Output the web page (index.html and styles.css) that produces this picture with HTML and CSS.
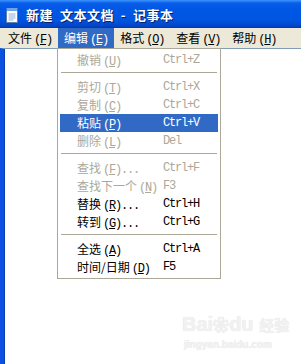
FILE: index.html
```html
<!DOCTYPE html>
<html lang="zh-CN">
  <head>
    <meta charset="utf-8">
    <meta name="viewport" content="width=device-width">
    <title>新建 文本文档 - 记事本</title>
    <link rel="stylesheet" href="styles.css">
  </head>
  <body>
    <div class="window">
      <div class="titlebar">
        <svg class="app-icon" width="16" height="16" viewBox="0 0 16 16">
          <rect x="2.5" y="2.5" width="11" height="13" fill="#fff" stroke="#5a7fa8"/>
          <rect x="2" y="1" width="12" height="3" fill="#2c7be0"/>
          <path d="M4 1v3M6 1v3M8 1v3M10 1v3M12 1v3" stroke="#cfe3ff" stroke-width="0.8"/>
          <path d="M4.5 7h7M4.5 9h7M4.5 11h7M4.5 13h5" stroke="#8fb0d8" stroke-width="1"/>
        </svg>
        <span class="title">新建&nbsp;&nbsp;文本文档&nbsp;&nbsp;-&nbsp;&nbsp;记事本</span>
      </div>

      <div class="menubar">
        <span class="menu">文件<span class="acc">(<u>F</u>)</span></span>
        <span class="menu open">编辑<span class="acc">(<u>E</u>)</span></span>
        <span class="menu">格式<span class="acc">(<u>O</u>)</span></span>
        <span class="menu">查看<span class="acc">(<u>V</u>)</span></span>
        <span class="menu">帮助<span class="acc">(<u>H</u>)</span></span>
      </div>

      <div class="client">
        <div class="watermark">
          <div class="wm-logo">Bai<span class="paw">❀</span>du <span class="wm-cn">经验</span></div>
          <div class="wm-url">jingyan.baidu.com</div>
        </div>
      </div>

      <ul class="dropdown">
        <li class="item disabled"><span>撤销<span class="acc">(<u>U</u>)</span></span><span class="key">Ctrl+Z</span></li>
        <li class="sep"></li>
        <li class="item disabled"><span>剪切<span class="acc">(<u>T</u>)</span></span><span class="key">Ctrl+X</span></li>
        <li class="item disabled"><span>复制<span class="acc">(<u>C</u>)</span></span><span class="key">Ctrl+C</span></li>
        <li class="item hover"><span>粘贴<span class="acc">(<u>P</u>)</span></span><span class="key">Ctrl+V</span></li>
        <li class="item disabled"><span>删除<span class="acc">(<u>L</u>)</span></span><span class="key">Del</span></li>
        <li class="sep"></li>
        <li class="item disabled"><span>查找<span class="acc">(<u>F</u>)...</span></span><span class="key">Ctrl+F</span></li>
        <li class="item disabled"><span>查找下一个<span class="acc">(<u>N</u>)</span></span><span class="key">F3</span></li>
        <li class="item"><span>替换<span class="acc">(<u>R</u>)...</span></span><span class="key">Ctrl+H</span></li>
        <li class="item"><span>转到<span class="acc">(<u>G</u>)...</span></span><span class="key">Ctrl+G</span></li>
        <li class="sep"></li>
        <li class="item"><span>全选<span class="acc">(<u>A</u>)</span></span><span class="key">Ctrl+A</span></li>
        <li class="item"><span>时间/日期<span class="acc">(<u>D</u>)</span></span><span class="key">F5</span></li>
      </ul>
    </div>
  </body>
</html>
```

FILE: styles.css
```css
html, body {
    margin: 0;
    padding: 0;
    height: 100%;
    background: #fff;
}
body {
    font-family: "Noto Sans CJK SC", "Liberation Sans", sans-serif;
    font-size: 12px;
    color: #000;
}
.window {
    position: relative;
    display: flex;
    flex-direction: column;
    width: 301px;
    height: 364px;
    overflow: hidden;
}
.titlebar {
    display: flex;
    align-items: center;
    gap: 6px;
    height: 28px;
    padding-left: 4px;
    box-sizing: border-box;
    background: linear-gradient(180deg, #3d95ff 0, #0a5ee8 3px, #0058e6 8px, #0055e0 20px, #0046c8 26px, #0039a8 28px);
}
.app-icon {
    flex: none;
    margin-top: 1px;
}
.title {
    color: #fff;
    font-weight: bold;
    font-size: 13px;
    letter-spacing: 0.5px;
    text-shadow: 1px 1px 0 #0a1e6a;
}
.menubar {
    display: flex;
    height: 20px;
    padding-left: 2px;
    background: #ece9d8;
    line-height: 20px;
}
.menu {
    padding: 0 6px 0 6px;
    white-space: nowrap;
}
.menu.open {
    background: #316ac5;
    color: #fff;
}
.acc {
    font-family: "Liberation Mono", monospace;
    font-size: 12px;
    letter-spacing: -1.2px;
    margin-left: 2px;
}
.client {
    position: relative;
    flex: 1;
    border-top: 1px solid #7f9db9;
    border-left: 4px solid #0b52e0;
    box-shadow: inset 1px 0 0 #0a3fb8;
    background: #fff;
}
.dropdown {
    position: absolute;
    left: 57px;
    top: 48px;
    width: 164px;
    box-sizing: border-box;
    margin: 0;
    padding: 2px;
    list-style: none;
    background: #fff;
    border: 1px solid #aca899;
}
.item {
    display: grid;
    grid-template-columns: 86px auto;
    height: 18px;
    line-height: 18px;
    padding-left: 17px;
    white-space: nowrap;
}
.item.disabled {
    color: #aca899;
}
.item.hover {
    background: #316ac5;
    color: #fff;
}
.key {
    font-family: "Liberation Mono", monospace;
    font-size: 12px;
    letter-spacing: -1.2px;
}
.sep {
    height: 1px;
    margin: 3px 1px 5px 1px;
    background: #aca899;
}
.watermark {
    position: absolute;
    left: 178px;
    top: 262px;
    white-space: nowrap;
    color: #f1f1f1;
    font-family: "Liberation Sans", sans-serif;
    text-shadow: 0 0 1px #dedede;
}
.wm-logo {
    font-size: 20px;
    font-weight: bold;
    line-height: 26px;
}
.paw {
    font-size: 16px;
}
.wm-cn {
    font-family: "Noto Sans CJK SC", sans-serif;
    font-size: 15px;
}
.wm-url {
    font-size: 10px;
    font-weight: bold;
    padding-left: 2px;
}
```
